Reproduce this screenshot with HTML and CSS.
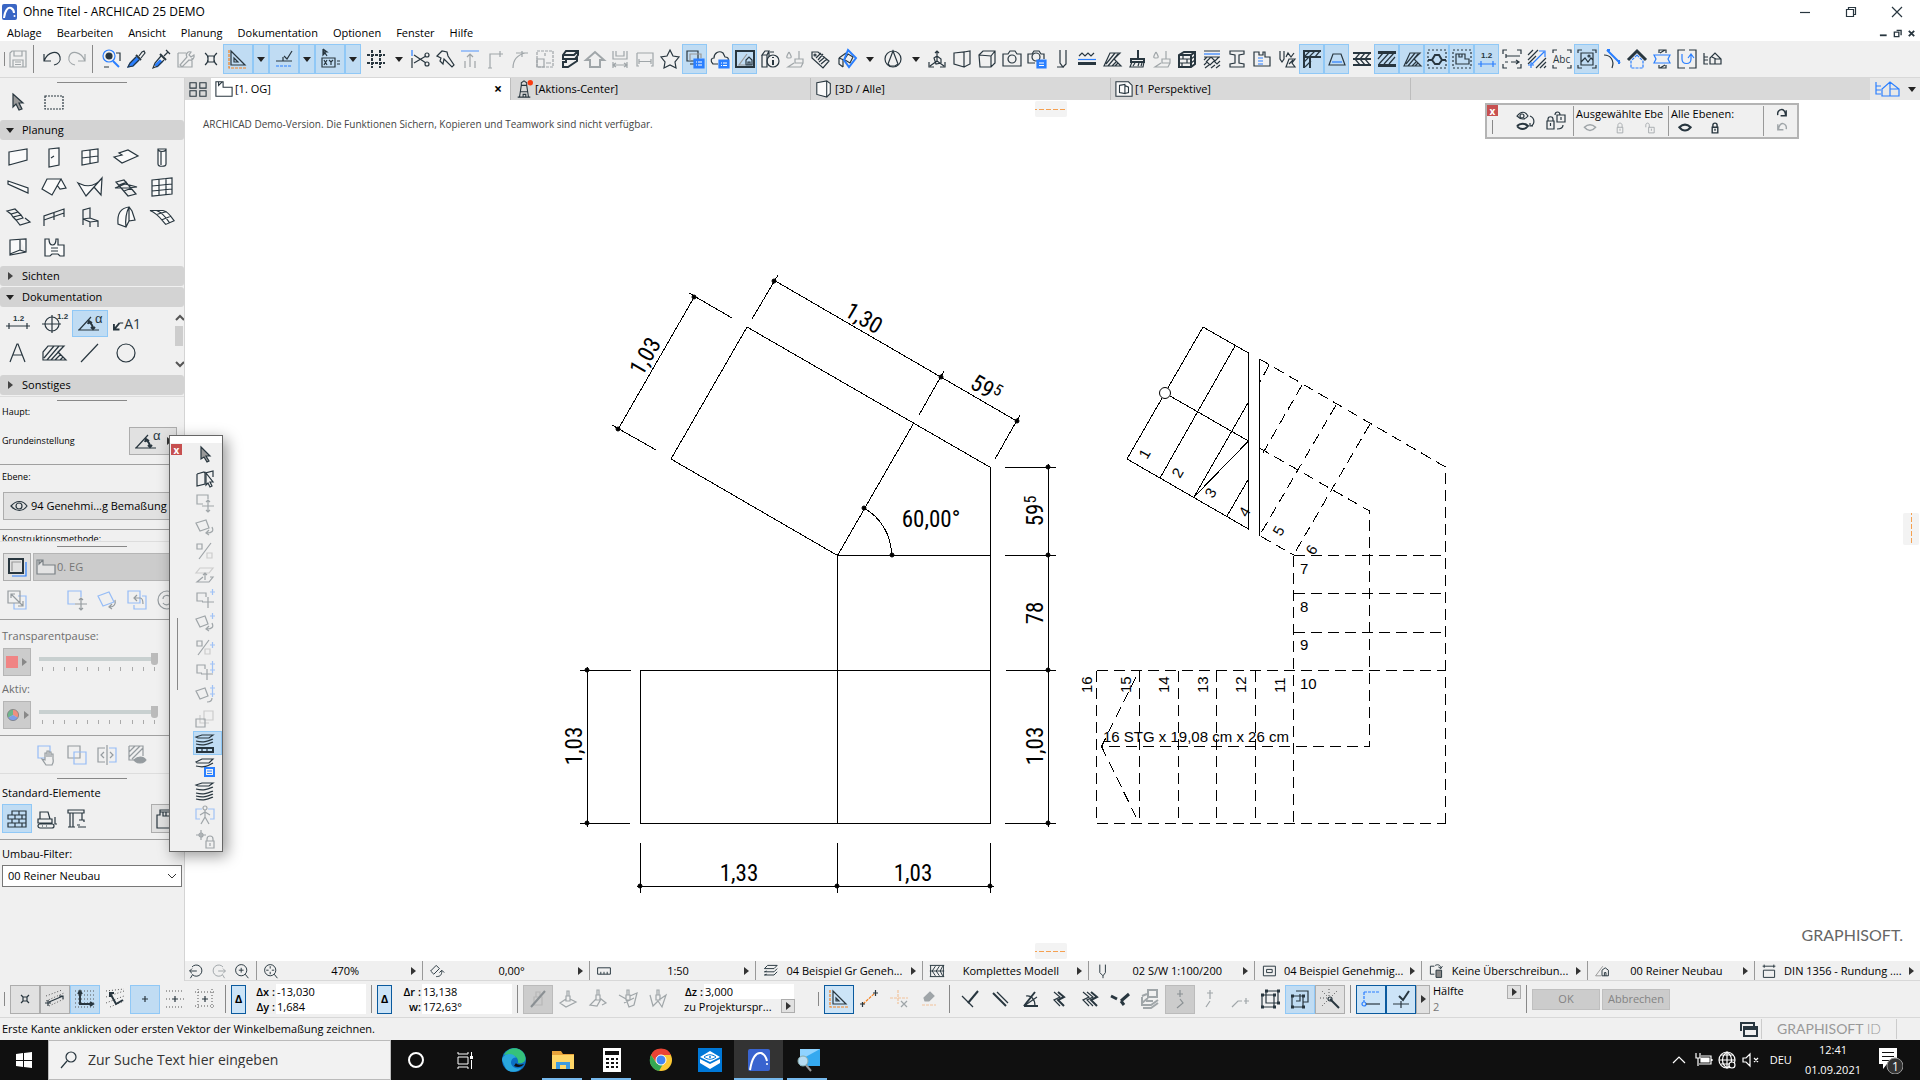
FILE: index.html
```html
<!DOCTYPE html>
<html lang="de">
<head>
<meta charset="utf-8">
<title>Ohne Titel - ARCHICAD 25 DEMO</title>
<link rel="stylesheet" href="styles.css">
</head>
<body>
<header class="titlebar">
  <svg class="applogo" viewBox="0 0 16 16"><rect width="15" height="16" rx="2" fill="#3a66c4"/><path d="M2 14C3 6 6 3 9 4c2 1 3 3 3 5" fill="none" stroke="#fff" stroke-width="2"/><circle cx="12.500" cy="12" r="1" fill="#fff"/></svg>
  <h1>Ohne Titel - ARCHICAD 25 DEMO</h1>
  <div class="winbtns">
    <button aria-label="Minimieren"><svg class="i" viewBox="0 0 20 20"><path d="M5 10.500h10"/></svg></button>
    <button aria-label="Verkleinern"><svg class="i" viewBox="0 0 20 20"><path d="M5.500 7.500h7v7h-7zM7.500 7.500v-2h7v7h-2"/></svg></button>
    <button aria-label="Schließen"><svg class="i" viewBox="0 0 20 20"><path d="M5 5l10 10M15 5L5 15"/></svg></button>
  </div>
</header>
<nav class="menubar">
  <a href="#">Ablage</a><a href="#">Bearbeiten</a><a href="#">Ansicht</a><a href="#">Planung</a><a href="#">Dokumentation</a><a href="#">Optionen</a><a href="#">Fenster</a><a href="#">Hilfe</a>
  <div class="docbtns">
    <svg class="i s" viewBox="0 0 20 20"><path stroke-width="4" d="M2 14h15"/></svg>
    <svg class="i s" viewBox="0 0 20 20"><path stroke-width="3" d="M3 7h10v10H3zM8 3h10v11"/></svg>
    <svg class="i s" viewBox="0 0 20 20"><path stroke-width="4" d="M4 4l12 12M16 4L4 16"/></svg>
  </div>
</nav>
<div class="toolbar">
  <i class="sep short"></i>
  <button class="dis" aria-label="Sichern"><svg class="i" viewBox="0 0 20 20"><path d="M2 4l2-2h14v16H2zM6 2v5h8V2M5 18v-7h10v7M7 13h6M7 15.500h6"/></svg></button>
  <i class="sep"></i>
  <button aria-label="Widerrufen"><svg class="i" viewBox="0 0 20 20"><path d="M2 5v7h7M2 12C6 2 16 1 18 8c1 4-2 7-6 8"/></svg></button>
  <button class="dis" aria-label="Wiederholen"><svg class="i" viewBox="0 0 20 20"><path d="M18 5v7h-7M18 12C14 2 4 1 2 8c-1 4 2 7 6 8"/></svg></button>
  <i class="sep"></i>
  <button aria-label="Suchen"><svg class="i" viewBox="0 0 20 20"><circle class="f" cx="8" cy="7" r="3"/><circle class="b" cx="8" cy="7" r="6"/><path class="b" stroke-width="2" d="M12 12l6 6"/><path d="M3 18h5M15 4h4v8"/></svg></button>
  <button aria-label="Parameter aufnehmen"><svg class="i" viewBox="0 0 20 20"><path class="bf" d="M2 18l2-4 6-6 3 3-6 6z"/><path stroke-width="2" d="M10 6l5 5"/><path d="M13 7l3-4 2-1 1 2-4 5M10 8l-6 6-2 4 5-1 6-6"/></svg></button>
  <button aria-label="Parameter übertragen"><svg class="i" viewBox="0 0 20 20"><path class="bf" d="M4 16l5-5 2 2-5 5z"/><path stroke-width="2" d="M9 5l6 6"/><path d="M13 7l4-4M15 1l4 4M10 7l-6 7-2 5 5-2 6-6"/></svg></button>
  <button class="dis" aria-label="Suchen und aktivieren"><svg class="i" viewBox="0 0 20 20"><path d="M2 4h8M2 4v14h14V9M11 8c-2-3 1-6 4-5l-2 3 2 2 3-2c1 3-2 6-5 5l-7 7-2-2z"/></svg></button>
  <button aria-label="Fangpunkt"><svg class="i" viewBox="0 0 20 20"><path d="M7 7h6v6H7zM4 4c3 2 3 4 3 6s0 4-3 6M16 4c-3 2-3 4-3 6s0 4 3 6"/></svg></button>
  <button class="on w" aria-label="Hilfslinien"><svg class="i" viewBox="0 0 20 20"><path d="M3 2l14 14H3zM6 9l4 4H6z"/><path class="o" stroke-dasharray="3 1" d="M1 1v18h18"/></svg></button><button class="on drop" aria-label="Optionen Hilfslinien"><b></b></button>
  <button class="on w" aria-label="Fanglinien"><svg class="i" viewBox="0 0 20 20"><path d="M2 12h16M9 12V8M10 7l3 3 5-8"/><path class="b" stroke-dasharray="3 1" d="M2 17h16"/></svg></button><button class="on drop" aria-label="Optionen Fanglinien"><b></b></button>
  <button class="on w" aria-label="Tracker"><svg class="i" viewBox="0 0 20 20"><path class="f" d="M3 0v6l2-2 2 3M3 0l4 3H5"/><path d="M2 9h13v9H2zM17 12h3M17 15h3M4 11l3 5M7 11l-3 5M9 11l2 2 2-2M11 13v3"/></svg></button><button class="on drop" aria-label="Optionen Tracker"><b></b></button>
  <button class="w" aria-label="Raster"><svg class="i" viewBox="0 0 20 20"><path stroke-width="2" stroke-dasharray="3 1" d="M1 6h18M1 14h18M6 1v18M14 1v18"/></svg></button><button class="drop" aria-label="Optionen Raster"><b></b></button>
  <button aria-label="Ausschneiden"><svg class="i" viewBox="0 0 20 20"><path class="b" d="M2 1v6"/><path d="M2 9v10M4 14l12-7M4 6l12 8"/><circle cx="17" cy="6" r="2"/><circle cx="17" cy="15" r="2"/></svg></button>
  <button aria-label="Trimmen"><svg class="i" viewBox="0 0 20 20"><path d="M2 7l5-5 5 1 1 4 6 9-2 2-8-8-1 5-3-3 1-3z"/></svg></button>
  <button class="dis" aria-label="Höhe"><svg class="i" viewBox="0 0 20 20"><path class="b" stroke-width="2" d="M1 2h18"/><path d="M10 5v13M7 8l3-3 3 3M5 12v7M15 12v7"/></svg></button>
  <button class="dis" aria-label="Ecke"><svg class="i" viewBox="0 0 20 20"><path d="M5 19V5h13M15 2v6M3 19h4"/></svg></button>
  <button class="dis" aria-label="Kurve"><svg class="i" viewBox="0 0 20 20"><path d="M3 19C3 11 7 6 15 4M12 2v6M6 4h12"/></svg></button>
  <button class="dis" aria-label="Skalieren"><svg class="i" viewBox="0 0 20 20"><path stroke-dasharray="3 1" d="M2 2h16v16H2z"/><path d="M2 10h7v8H2zM11 14h5M10 7V4"/></svg></button>
  <button aria-label="Profil"><svg class="i" viewBox="0 0 20 20"><path stroke-width="2" d="M3 6l3-4h12v4l-3 4H3zM3 6h11l4-4M6 10v3H3v5h5l9-6v-4"/></svg></button>
  <button class="dis" aria-label="Dach"><svg class="i" viewBox="0 0 20 20"><path stroke-width="2" d="M1 11l9-8 9 8h-4v7H5v-7z"/></svg></button>
  <button class="dis" aria-label="Spur"><svg class="i" viewBox="0 0 20 20"><path d="M3 2v8h14V2M3 13v6M17 13v6M3 16h14M6 2v5h8V2M6 14l-3 2 3 2M14 14l3 2-3 2"/></svg></button>
  <button class="dis" aria-label="Maß"><svg class="i" viewBox="0 0 20 20"><path d="M2 4h16v13h-2M2 4v13h2M4 10v5M16 10v5M4 12.500h12"/></svg></button>
  <button aria-label="Favoriten"><svg class="i" viewBox="0 0 20 20"><path d="M10 1l3 6 6 1-4 5 1 6-6-3-6 3 1-6-4-5 6-1z"/></svg></button>
  <button class="on" aria-label="Ansichten"><svg class="i" viewBox="0 0 20 20"><path d="M2 2h11v10H2zM5 15h4"/><path class="g" d="M5 12V5h11v4"/><path class="bf" d="M9 10h10v9H9z"/><path class="wh" d="M11 13h1M13 13h4M11 16h1M13 16h4"/></svg></button>
  <button aria-label="Cloud"><svg class="i" viewBox="0 0 20 20"><path d="M8 15H3C0 12 1 9 4 9c0-5 5-8 9-5l2 4c3 0 4 2 3 3"/><path class="bf" d="M9 11h10v8H9z"/><path class="wh" d="M11 14h1M13 14h4M11 16.500h1M13 16.500h4"/></svg></button>
  <button class="on" aria-label="Projekt"><svg class="i" viewBox="0 0 20 20"><path stroke-width="2" d="M1 2h18v16H1z"/><path class="g" d="M10 16H4l8-11"/><path d="M11 16v-5l3-3 3 3v5zM13 16v-3h2v3"/></svg></button>
  <button aria-label="Information"><svg class="i" viewBox="0 0 20 20"><path d="M2 6l3-4h4L7 6zM2 6v12h5V6M9 2v5M10 3h4"/><circle cx="13" cy="12" r="6"/><path stroke-width="2" d="M13 11v5M13 8v1"/></svg></button>
  <button class="dis" aria-label="Oberfläche malen"><svg class="i" viewBox="0 0 20 20"><path d="M4 3c3 5 3 6 0 6s-3-1 0-6M14 2v8M10 10h8v4h-8zM9 14l-6 4h13l2-4"/></svg></button>
  <button aria-label="Etikett"><svg class="i" viewBox="0 0 20 20"><path d="M2 3l6 0 11 9-6 7L2 9zM6 9l5-5M8 11l5-6M11 15l6-5M9 13l6-5"/><circle cx="5" cy="6" r="1"/></svg></button>
  <button class="w" aria-label="3D-Schnitt"><svg class="i" viewBox="0 0 20 20"><path d="M2 9l7-5M2 9v6l4 3M2 9l5 2 4-6 5 3-3 6-5-3M6 18v-7"/><path class="b" stroke-width="2" d="M11 1l8 8-7 9-5-7z"/></svg></button><button class="drop" aria-label="Optionen 3D"><b></b></button>
  <button class="w" aria-label="Sonne"><svg class="i" viewBox="0 0 20 20"><circle cx="10" cy="10" r="8"/><path d="M10 2l5 13-3 2H7l-2-2z"/></svg></button><button class="drop" aria-label="Optionen Sonne"><b></b></button>
  <button aria-label="Achsen"><svg class="i" viewBox="0 0 20 20"><path d="M10 12V2M8 4l2-2 2 2M10 12l-7 5M10 12l7 5M2 13v5h5M13 18h5v-5M7 9l3-2 4 3v4l-5 1z"/></svg></button>
  <button aria-label="3D-Fenster"><svg class="i" viewBox="0 0 20 20"><path d="M2 4l10-1v15L2 15zM12 3l6-1v13l-6 3"/></svg></button>
  <button aria-label="Quader"><svg class="i" viewBox="0 0 20 20"><path d="M2 6l4-4h12v12l-4 4H3zM2 6l12 1 4-5M14 7v11"/></svg></button>
  <button aria-label="Kamera"><svg class="i" viewBox="0 0 20 20"><path d="M1 5h5l2-3h5l2 3h4v12H1z"/><circle cx="10" cy="10" r="4"/></svg></button>
  <button aria-label="Kamera-Einstellungen"><svg class="i" viewBox="0 0 20 20"><path d="M8 14H1V5h4l2-3h5l2 3h3v5"/><circle cx="9" cy="8" r="4"/><path class="bf" d="M10 11h9v8h-9z"/><path class="wh" d="M12 14h5M12 16.500h5"/></svg></button>
  <button aria-label="Stift"><svg class="i" viewBox="0 0 20 20"><path d="M8 1v13l3 4 3-3V1M11 17v2M5 18h5"/></svg></button>
  <button aria-label="Linientyp"><svg class="i" viewBox="0 0 20 20"><path d="M2 7l3-3 3 3 3-3 3 3 3-3"/><path class="b" d="M1 10.500h18"/><path stroke-width="3" d="M1 14.500h18"/></svg></button>
  <button aria-label="Schraffur"><svg class="i" viewBox="0 0 20 20"><path d="M2 17L8 4h10l-6 6 7 7zM4 15L13 4M6 17L16 5M10 17l4-4M13 17l3-3"/></svg></button>
  <button aria-label="Pinsel"><svg class="i" viewBox="0 0 20 20"><path stroke-width="2" d="M11 1v8M4 10h13v3H4z"/><path d="M5 13l-2 5h13l1-5M8 14l-2 3M12 14l-1 3M15 14l-1 3"/></svg></button>
  <button class="dis" aria-label="Oberfläche"><svg class="i" viewBox="0 0 20 20"><path d="M4 3c3 5 3 6 0 6s-3-1 0-6M14 2v8M10 10h8v4h-8zM9 14l-6 4h13l2-4"/></svg></button>
  <button aria-label="Baustoffe"><svg class="i" viewBox="0 0 20 20"><path stroke-width="2" d="M2 6l5-3h11v12l-4 3H2zM2 6h12l4-3M14 6v12"/><path d="M2 10h12M2 14h12M6 6v4M10 10v4M5 14v4M14 10l4-3M14 14l4-3"/></svg></button>
  <button aria-label="Schichten"><svg class="i" viewBox="0 0 20 20"><path class="b" d="M2 5h16"/><path d="M2 2h16M2 8h16M2 11l3-3M4 13l5-5 4 4 4-4M2 16l3-3 3 3 4-4 3 3 3-3M3 19l4-3M9 19l4-3M14 19l4-3"/></svg></button>
  <button aria-label="Träger"><svg class="i" viewBox="0 0 20 20"><path d="M3 2h14v3l-5 1v8l5 1v3H3v-3l5-1V6L3 5z"/></svg></button>
  <button aria-label="Raum"><svg class="i" viewBox="0 0 20 20"><path d="M2 3h5v3h4V3h2v5h5v9H2z"/><path class="b" d="M6 9h5M6 12h5M6 15h5"/></svg></button>
  <button aria-label="Stifte"><svg class="i" viewBox="0 0 20 20"><path d="M3 2v8l2 3 2-3V2M9 8l2-4 3 4 3-4M9 18l3-8h6l-3 4 3 4zM12 15l4-4"/></svg></button>
  <button class="on" aria-label="Wandverbindung"><svg class="i" viewBox="0 0 20 20"><path stroke-width="2" d="M1 2h18M1 8h18M2 2v17M8 8v11"/><path d="M2 8l6-6M2 13L13 2M3 18l6-6M13 8l5-6"/></svg></button>
  <button class="on" aria-label="Dachform"><svg class="i" viewBox="0 0 20 20"><path d="M6 5h8l4 11H2z"/><path class="b" d="M5 13h10"/></svg></button>
  <button aria-label="Wandschicht"><svg class="i" viewBox="0 0 20 20"><path stroke-width="2" d="M1 4h18M1 10h18M1 16h18"/><path d="M3 10l5-6M8 10l5-6M13 10l5-6M3 10l5 6M8 10l5 6M13 10l5 6"/></svg></button>
  <button class="on" aria-label="Wandschraffur"><svg class="i" viewBox="0 0 20 20"><path stroke-width="3" d="M1 3.500h18M1 16.500h18"/><path d="M2 15L12 4M7 15L17 4M12 15l6-7M1 10l5-6"/></svg></button>
  <button class="on" aria-label="Schraffuren"><svg class="i" viewBox="0 0 20 20"><path d="M2 17L8 4h10l-6 6 7 7zM4 15L13 4M6 17L16 5M10 17l4-4M13 17l3-3"/></svg></button>
  <button class="on" aria-label="Morph"><svg class="i" viewBox="0 0 20 20"><path stroke-dasharray="2 2" d="M1 1h18v18H1z"/><path stroke-width="2" d="M1 11h4l3-5h4l3 5h4M5 11l3 4h4l3-4"/></svg></button>
  <button class="on" aria-label="Raumzone"><svg class="i" viewBox="0 0 20 20"><path stroke-dasharray="2 2" d="M1 1h18v18H1z"/><path d="M4 5h9v5h4v5H4zM7 5v3h3V5"/></svg></button>
  <button class="on" aria-label="Bemaßung"><svg class="i" viewBox="0 0 20 20"><text x="4" y="9" class="it">1.2</text><path class="b" d="M1 15h18M4 12v6M16 12v6"/></svg></button>
  <button aria-label="Einpassen"><svg class="i" viewBox="0 0 20 20"><path d="M1 5V1h4M15 1h4v4M19 15v4h-4M5 19H1v-4M4 7h14M4 5v4M3 13h3M9 13h7M14 11l3 2-3 2"/></svg></button>
  <button aria-label="Schraffurausrichtung"><svg class="i" viewBox="0 0 20 20"><path d="M1 6l5-5M1 11L11 1M1 15L9 7M9 19L19 9M13 19l6-6M17 19l2-2"/><path class="b" d="M5 15L17 3M12 2h6v6M4 13v6M1 16h6"/></svg></button>
  <button aria-label="Text"><svg class="i" viewBox="0 0 20 20"><path d="M1 4V1h4M15 1h4v3M19 16v3h-4M5 19H1v-3"/><text x="1" y="14" class="it abc">Abc</text></svg></button>
  <button class="on" aria-label="Bild"><svg class="i" viewBox="0 0 20 20"><path d="M1 4V1h4M15 1h4v3M19 16v3h-4M5 19H1v-3M4 4h12v12H4zM4 13l4-4 3 4 3-4 2 2"/><circle cx="12" cy="7" r="1"/></svg></button>
  <button aria-label="Tangente"><svg class="i" viewBox="0 0 20 20"><path d="M2 6c6 0 11 5 8 13"/><path class="b" stroke-width="2" d="M5 1l13 13M5 1h3M17 11v4"/></svg></button>
  <button aria-label="First"><svg class="i" viewBox="0 0 20 20"><path stroke-width="3" d="M1 11l9-9 9 9"/><path class="b" stroke-dasharray="3 1" d="M10 6l-6 6v7h12v-7z"/></svg></button>
  <button aria-label="Rohr"><svg class="i" viewBox="0 0 20 20"><path class="b" d="M2 6h16l-2 4 2 4H2l2-4z"/><path d="M7 4V1h7v3M8 4l5-3M7 16v3h7v-3M8 19l5-3"/></svg></button>
  <button aria-label="Magnet"><svg class="i" viewBox="0 0 20 20"><path d="M8 1H1v18h7M12 1h7v18h-7"/><path class="b" d="M5 5v5c0 6 9 6 9 0V6M11 9l3-4 3 4"/></svg></button>
  <button aria-label="Projekt-Mappe"><svg class="i" viewBox="0 0 20 20"><path d="M2 4v11h4M2 8h4M2 11h4M8 15v-6l5-5 6 6v5zM13 15v-5h6M10 8l4 2"/></svg></button>
</div>
<div class="middle">
  <aside class="sidebar">
    <hr class="grip">
    <div class="arrowrow">
      <button aria-label="Pfeil"><svg class="i" viewBox="0 0 20 20"><path fill="#999" d="M5 2l10 9H11l3 6-3 1-3-6-3 3z"/></svg></button>
      <button aria-label="Markierung"><svg class="i" viewBox="0 0 20 20"><path stroke-dasharray="2 1" d="M1 4h18v13H1z"/></svg></button>
    </div>
    <button class="sect open">Planung</button>
    <div class="tools">
      <button aria-label="Wand"><svg class="i" viewBox="0 0 20 20"><path class="w" d="M1 5l18-3v11L1 18z"/></svg></button>
      <button aria-label="Tür"><svg class="i" viewBox="0 0 20 20"><path class="w" d="M5 2l10-1v17l-10 2zM7 11l3-2"/></svg></button>
      <button aria-label="Fenster"><svg class="i" viewBox="0 0 20 20"><path class="w" d="M2 4l16-2v13L2 18zM10 3v14M2 11l16-2"/></svg></button>
      <button aria-label="Decke"><svg class="i l" viewBox="0 0 26 20"><path class="w" d="M1 10l8-2-3-2 9-3 10 6-16 7z"/></svg></button>
      <button aria-label="Stütze"><svg class="i" viewBox="0 0 20 20"><path class="w" d="M6 2h8v15c0 3-8 3-8 0zM9 5v13M6 3c2 2 6 2 8 0"/></svg></button>
      <button aria-label="Unterzug"><svg class="i" viewBox="0 0 20 20"><path class="w" d="M0 4l20 7v5L0 7z"/></svg></button>
      <button aria-label="Dach"><svg class="i l" viewBox="0 0 26 20"><path class="w" d="M1 12L6 2h14l-9 16zM20 2l5 9-6 1-3-4"/></svg></button>
      <button aria-label="Schale"><svg class="i l" viewBox="0 0 26 20"><path class="w" d="M1 6c10 5 18 3 24-5l-1 17-7-8-8 9zM9 19L25 1"/></svg></button>
      <button aria-label="Freiform"><svg class="i l" viewBox="0 0 26 20"><path d="M3 5l8-2 12 14-8 2zM2 11h12l10-1-12-3zM6 8l8-3M11 14l8-3"/></svg></button>
      <button aria-label="Fassade"><svg class="i" viewBox="0 0 20 20"><path class="w" d="M0 3l20-2v16L0 19zM7 2v16M14 1v17M0 9l20-2M0 14l20-2"/></svg></button>
      <button aria-label="Treppe"><svg class="i l" viewBox="0 0 26 20"><path d="M2 4l8-2 3 3-7 2zM6 7l2 3 8-2-3-3M8 10l3 3 7-2-2-3M11 13l4 5 10-3-5-4"/></svg></button>
      <button aria-label="Geländer"><svg class="i l" viewBox="0 0 26 20"><path d="M3 19V9l20-7v8M3 13l20-7M13 5v8"/></svg></button>
      <button aria-label="Objekt"><svg class="i" viewBox="0 0 20 20"><path d="M3 18V3l7-2v10M3 12l7-1 8 3v6M3 12l7 3v5M10 15l8-1"/></svg></button>
      <button aria-label="Morph"><svg class="i" viewBox="0 0 20 20"><path class="w" d="M2 17C1 7 5 1 13 0l3 4 3 9-6 1-3 6zM13 0c-3 6-4 12-3 20M13 0v14"/></svg></button>
      <button aria-label="Netz"><svg class="i l" viewBox="0 0 28 20"><path class="w" d="M1 3h14c6 1 8 6 12 11l-9 4C12 11 9 6 1 3M8 3c6 2 10 7 14 13M9 7l10-3M14 13l10-4"/></svg></button>
      <button aria-label="Raum"><svg class="i" viewBox="0 0 20 20"><path class="w" d="M2 3l16-1v13L2 18zM12 2v11l6 2M12 13L2 17"/></svg></button>
      <button aria-label="Öffnung"><svg class="i" viewBox="0 0 20 20"><path class="w" d="M1 2h4c0 8 7 8 7 0h2v6h6v11h-4l-2-2h-6l-2 2H1zM7 11h7M7 14h7"/></svg></button>
    </div>
    <button class="sect">Sichten</button>
    <button class="sect open">Dokumentation</button>
    <div class="tools docs">
      <button aria-label="Bemaßung"><svg class="i l" viewBox="0 0 26 20"><text x="8" y="8" class="it">1.2</text><path d="M1 13h24M4 10v6M22 10v6"/></svg></button>
      <button aria-label="Höhenkote"><svg class="i l" viewBox="0 0 26 20"><circle cx="11" cy="11" r="7"/><path d="M1 11h19M11 2v18"/><text x="16" y="6" class="it">1.2</text></svg></button>
      <button class="on" aria-label="Winkelbemaßung"><svg class="i l" viewBox="0 0 26 20"><path d="M1 17h21M2 17L14 4"/><path stroke-width="2" d="M12 9c3 2 4 4 4 7M11 11l1-3 3 2M14 14l2 2 2-2"/><text x="18" y="10" class="it al">α</text></svg></button>
      <button aria-label="Etikett"><svg class="i l" viewBox="0 0 28 20"><path stroke-width="2" d="M1 11v6h6M2 16l5-6"/><path d="M7 10h4"/><text x="12" y="16" class="it big">A1</text></svg></button>
      <i></i>
      <button aria-label="Text"><svg class="i" viewBox="0 0 20 20"><path d="M2 19L9 1h1l7 18M5 12h9"/></svg></button>
      <button aria-label="Schraffur"><svg class="i l" viewBox="0 0 26 20"><path d="M2 17V9l5-6h16l-6 6 8 8zM3 15L13 3M6 17L18 3M10 17L22 4M14 17l6-6M19 17l3-3"/></svg></button>
      <button aria-label="Linie"><svg class="i" viewBox="0 0 20 20"><path d="M1 19L18 1"/></svg></button>
      <button aria-label="Kreis"><svg class="i" viewBox="0 0 20 20"><circle cx="10" cy="10" r="9"/></svg></button>
      <div class="scroll"><svg viewBox="0 0 9 54"><path class="u" d="M1 6l4-4 4 4M1 48l4 4 4-4"/><rect y="12" width="8" height="20" fill="#cdcdcd"/></svg></div>
    </div>
    <button class="sect">Sonstiges</button>
    <div class="info">
      <hr class="grip">
      <p class="cap">Haupt:</p>
      <div class="mainrow"><span class="cap">Grundeinstellung</span>
        <button class="raised" aria-label="Winkel-Einstellungen"><svg class="i l" viewBox="0 0 26 20"><path d="M0 17h21M1 17L13 4"/><path stroke-width="2" d="M11 9c3 2 4 4 4 7M10 11l1-3 3 2M13 14l2 2 2-2"/><text x="18" y="9" class="it al">α</text></svg><b></b></button></div>
      <p class="cap eb">Ebene:</p>
      <button class="raised layer"><svg class="i" viewBox="0 0 20 20"><path d="M2 10c5-6 12-6 16 0-4 6-11 6-16 0z"/><circle cx="10" cy="10" r="3"/></svg>94 Genehmi...g Bemaßung</button>
      <p class="cap clip">Konstruktionsmethode:</p>
    </div>
    <div class="trace">
      <hr class="grip">
      <div class="row"><button class="raised" aria-label="Transparentpause"><svg class="i" viewBox="0 0 20 20"><path class="b" d="M5 19h14V5"/><path stroke-width="2" d="M2 2h14v14H2z"/><path class="g" d="M5 14V5h9"/></svg></button>
      <button class="ref" disabled><svg class="i" viewBox="0 0 20 20"><path class="w" d="M1 3h6v5h12v9H1zM3 3v4l4-4"/></svg>0. EG</button></div>
      <div class="row ghost">
        <svg class="i" viewBox="0 0 20 20"><path class="b" d="M11 6h8v13H7v-6"/><path d="M1 1h12v12H1zM4 4l12 12M4 8V4h4M16 11v5h-5"/></svg>
        <svg class="i sp" viewBox="0 0 20 20"><path class="b" d="M8 14H1V1h13v6"/><path d="M14 8v12M8 14h12M12 10l2-2 2 2M12 18l2 2 2-2"/></svg>
        <svg class="i" viewBox="0 0 20 20"><path class="b" d="M1 6l11-4 5 10-11 4z"/><path d="M18 10c1 4-1 7-5 7M15 14l-3 3 3 2"/></svg>
        <svg class="i" viewBox="0 0 20 20"><path class="b" d="M1 1h12v12H1zM15 6h4v13H7v-4"/><path d="M8 8h5c3 0 3 3 3 6M10 5L7 8l3 3"/></svg>
        <svg class="i" viewBox="0 0 20 20"><circle cx="10" cy="10" r="9"/><path d="M6 9c0-4 6-5 8-1M14 12c-1 3-6 4-8 1"/></svg>
      </div>
      <hr class="line">
      <label class="lab" for="op1">Transparentpause:</label>
      <div class="row slide"><button class="ref sq" aria-label="Farbe Transparentpause" disabled><i class="red"></i><b></b></button><div class="track"><input id="op1" type="range" value="100" disabled><div class="ticks"><i></i><i></i><i></i><i></i><i></i><i></i><i></i><i></i><i></i><i></i><i></i></div></div></div>
      <label class="lab" for="op2">Aktiv:</label>
      <div class="row slide second"><button class="ref sq" aria-label="Farbe Aktiv" disabled><svg class="pie" viewBox="0 0 20 20"><path fill="#6fb58c" d="M10 10V2a8 8 0 0 0-7 12z"/><path fill="#ef9080" d="M10 10V2a8 8 0 0 1 7 12z"/><path fill="#7f9fe8" d="M10 10l7 4a8 8 0 0 1-14 0z"/><circle cx="10" cy="10" r="8" fill="none" stroke="#777"/></svg><b></b></button><div class="track"><input id="op2" type="range" value="100" disabled><div class="ticks"><i></i><i></i><i></i><i></i><i></i><i></i><i></i><i></i><i></i><i></i><i></i></div></div></div>
      <hr class="line">
      <div class="row ghost mid">
        <svg class="i" viewBox="0 0 20 20"><path class="b" d="M8 13H1V1h12v6"/><path d="M9 20l-4-6 3 1V8h2v4V6h2v6V7h2v5V9h2v5c1 4-1 5-1 6z"/></svg>
        <svg class="i" viewBox="0 0 20 20"><path d="M1 1h12v12H1z"/><path class="b" d="M7 7h12v12H7z"/></svg>
        <svg class="i" viewBox="0 0 20 20"><path d="M8 3H1v14h7M7 7l-3 3 3 3M13 7l3 3-3 3M10 0v20"/><path class="b" d="M12 3h7v14h-7"/></svg>
        <svg class="i" viewBox="0 0 20 20"><path d="M2 1h14v10M2 1v14h6M2 7l6-6M2 12L13 1M5 14L16 3"/><path class="f" d="M7 15c4-4 9-4 12 0-3 4-9 4-12 0z"/></svg>
      </div>
    </div>
    <div class="reno">
      <hr class="grip">
      <p class="lab dark">Standard-Elemente</p>
      <div class="row els">
        <button class="on" aria-label="Bestand"><svg class="i" viewBox="0 0 20 20"><path d="M5 2h14v4H5zM1 6h14v4H1zM5 10h14v4H5zM1 14h14v4H1zM12 2v4M8 6v4M12 10v4M8 14v4M19 6v4M19 14v4h-4"/></svg></button>
        <button aria-label="Abbruch"><svg class="i" viewBox="0 0 20 20"><path d="M3 10V3h8l2 7M1 10h14v4H1zM18 8v7h2M3 15h12a2 2 0 0 1 0 4H3a2 2 0 0 1 0-4M5 17h1M9 17h1"/></svg></button>
        <button aria-label="Neubau"><svg class="i" viewBox="0 0 20 20"><path d="M1 1h16v3H1zM3 4v14M6 4v14M1 18h7M15 4v7M12 11h5v2M11 18h8M10 16h3"/></svg></button>
        <button class="raised end" aria-label="Überschreibungen"><svg class="i" viewBox="0 0 20 20"><path d="M1 6h3V3h3v4h12v12H1zM4 3V1h12v14M7 3h7M10 7V3"/></svg></button>
      </div>
      <hr class="line">
      <label class="lab dark" for="filt">Umbau-Filter:</label>
      <select id="filt"><option>00 Reiner Neubau</option></select>
    </div>
  </aside>
  <main class="main">
    <nav class="tabs">
      <button class="ov" aria-label="Übersicht"><svg class="i" viewBox="0 0 20 20"><path d="M1 3h7v6H1zM12 3h7v6h-7zM1 12h7v6H1zM12 12h7v6h-7z"/></svg></button>
      <a class="tab act" href="#"><svg class="i" viewBox="0 0 20 20"><path d="M1 2h8v6h10v10H1zM4 2v4l4-4"/></svg>[1. OG]<span>×</span></a>
      <a class="tab" href="#"><svg class="i" viewBox="0 0 20 20"><path d="M3 19h14M5 19L7 6h6l2 13M7 6V3l3-2 3 2v3M6 13h8M9 19v-3h3v3"/><circle cx="17" cy="3" r="3" fill="#fb3b10" stroke="none"/></svg>[Aktions-Center]</a>
      <a class="tab" href="#"><svg class="i" viewBox="0 0 20 20"><path class="w" d="M2 3l11-2v18L2 16zM13 1l4 3v11l-4 4"/></svg>[3D / Alle]</a>
      <a class="tab" href="#"><svg class="i" viewBox="0 0 20 20"><path class="w" d="M1 2h14l4 4v12H1z"/><path d="M5 6l6-1v10l-6-1zM11 6l4 2v6l-4 1"/></svg>[1 Perspektive]</a>
      <button class="navi" aria-label="Navigator"><svg class="i l" viewBox="0 0 26 20"><path class="b" d="M2 3v12h5M2 7h5M2 11h5M8 17V10l8-7 9 7v7zM16 3v14M16 10h9"/></svg><b></b></button>
    </nav>
    <section class="canvas">
      <p class="note">ARCHICAD Demo-Version. Die Funktionen Sichern, Kopieren und Teamwork sind nicht verfügbar.</p>
      <svg class="plan" width="100%" height="100%">
        <g transform="translate(-185 -100)">
          <path d="M747 327L671 459L837.500 555.500L913.500 423.500M747 327L990.500 467.500V823.500H640.500V670.500H990.500M837.500 555.500H990.500M837.500 555.500V823.500"/>
          <path d="M864 508A54 54 0 0 1 891.500 555.500"/>
          <path d="M587.500 667V827M580 670.500H631M580 823.500H630M640.500 843V893M837.500 843V893M990.500 843V893M637 886.500H994M1048.500 464V827M1005 467.500H1056M1005 555.500H1056M1006 670.500H1056M1005 823.500H1056"/>
          <path d="M689 293L732 318M612 425L656 450M694.500 296.500L618.500 428.500M774.500 280.500L1017.500 421.500M778 275L752 319M944 371L919 415M1020 415L995 459"/>
          <g class="dots"><circle cx="587" cy="670" r="2"/><circle cx="587" cy="823" r="2"/><circle cx="640" cy="886" r="2"/><circle cx="837" cy="886" r="2"/><circle cx="990" cy="886" r="2"/><circle cx="1048" cy="467" r="2"/><circle cx="1048" cy="555" r="2"/><circle cx="1048" cy="670" r="2"/><circle cx="1048" cy="823" r="2"/><circle cx="694" cy="297" r="2"/><circle cx="618" cy="429" r="2"/><circle cx="774" cy="281" r="2"/><circle cx="941" cy="377" r="2"/><circle cx="1017" cy="421" r="2"/><circle cx="864" cy="508" r="2"/><circle cx="892" cy="555" r="2"/></g>
          <g class="dim">
            <text x="931" y="527">60,00°</text><text x="739" y="881">1,33</text><text x="913" y="881">1,03</text>
            <text transform="translate(582 746) rotate(-90)">1,03</text><text transform="translate(1043 746) rotate(-90)">1,03</text><text transform="translate(1043 613) rotate(-90)">78</text>
            <text transform="translate(1043 511) rotate(-90)">59<tspan dy="-7" class="sup">5</tspan></text>
            <text transform="translate(652 360) rotate(-60)">1,03</text><text transform="translate(860 325) rotate(30)">1,30</text><text transform="translate(982 395) rotate(30)">59<tspan dy="-7" class="sup">5</tspan></text>
          </g>
          <path d="M1248.500 353V529L1127 459L1203 327L1248.500 353M1235 346L1160 478M1248.500 402L1194 497L1248.500 441L1170 396M1248.500 479L1227 516M1259.500 359V536"/>
          <circle cx="1165" cy="393" r="5.500" fill="#fff"/>
          <path class="dash" d="M1259.500 359L1445.500 467V823.500M1269 365L1259 384M1302 385L1259 460M1336 405L1259.500 535.500L1293.500 555M1370 424L1293.500 555M1259.500 448L1369.500 511V746.500H1101.500L1139 671M1101.500 746.500L1139 823M1293.500 555.500H1445.500M1293.500 593.500H1445.500M1293.500 632.500H1445.500M1096.500 670.500H1445.500M1096.500 823.500H1445.500M1096.500 670.500V823.500M1139.500 670.500V823.500M1178.500 670.500V823.500M1216.500 670.500V823.500M1255.500 670.500V823.500M1293.500 555.500V823.500"/>
          <g class="num">
            <text x="1300" y="574">7</text><text x="1300" y="612">8</text><text x="1300" y="650">9</text><text x="1300" y="689">10</text><text x="1103" y="742">16 STG x 19,08 cm x 26 cm</text>
            <text transform="translate(1092 693) rotate(-90)">16</text><text transform="translate(1131 693) rotate(-90)">15</text><text transform="translate(1169 693) rotate(-90)">14</text><text transform="translate(1208 693) rotate(-90)">13</text><text transform="translate(1246 693) rotate(-90)">12</text><text transform="translate(1285 693) rotate(-90)">11</text>
            <text transform="translate(1147 460) rotate(-60)">1</text><text transform="translate(1180 479) rotate(-60)">2</text><text transform="translate(1213 499) rotate(-60)">3</text><text transform="translate(1247 518) rotate(-60)">4</text><text transform="translate(1281 537) rotate(-60)">5</text><text transform="translate(1314 556) rotate(-60)">6</text>
          </g>
        </g>
      </svg>
      <i class="handle top"></i><i class="handle bottom"></i><i class="handle right"></i>
      <div class="layers">
        <div class="lx"><button class="close" aria-label="Palette schließen">x</button><i></i></div>
        <svg class="i" viewBox="0 0 20 20"><path d="M1 5c4-5 8-5 11 0-3 4-7 4-11 0z"/><circle cx="6" cy="5" r="2"/><path stroke-width="2" d="M1 15c3-3 8-3 11 0-3 4-8 4-11 0"/><path d="M14 5c5 2 5 8 1 10M17 15h-3v-3"/></svg>
        <svg class="i" viewBox="0 0 20 20"><path d="M1 10h7v8H1zM2 10V8c0-3 5-3 5 0v2M11 4h8v7h-8zM9 4c0-4 5-4 5 0M4.500 12v3M15 6v3M11 18c4 0 6-1 6-4"/></svg>
        <div class="grp"><span>Ausgewählte Ebe</span><div class="dis"><svg class="i" viewBox="0 0 20 20"><path stroke-width="2" d="M2 9c5-5 11-5 16 0-5 6-11 6-16 0z"/></svg><svg class="i" viewBox="0 0 20 20"><path d="M6 9h8v8H6zM7 9V6c0-4 6-4 6 0v3M10 11v3"/></svg><svg class="i" viewBox="0 0 20 20"><path d="M8 9h8v8H8zM4 9V6c0-4 5-4 5 0v3M12 11v3"/></svg></div></div>
        <div class="grp all"><span>Alle Ebenen:</span><div><svg class="i" viewBox="0 0 20 20"><path stroke-width="3" d="M2 9c5-5 11-5 16 0-5 6-11 6-16 0z"/></svg><svg class="i" viewBox="0 0 20 20"><path stroke-width="2" d="M6 9h8v8H6zM7 9V6c0-4 6-4 6 0v3M10 11v3"/></svg></div></div>
        <div class="grp last"><svg class="i" viewBox="0 0 20 20"><path stroke-width="2" d="M16 6v8h-8M15 13C15 1 2 4 4 13"/></svg><svg class="i dis" viewBox="0 0 20 20"><path stroke-width="2" d="M4 6v8h8M5 13C6 1 18 4 16 13"/></svg></div>
      </div>
      <div class="brand">GRAPHISOFT.</div>
    </section>
    <div class="quick">
      <div class="zooms">
        <svg class="i" viewBox="0 0 20 20"><path d="M2 10h9M5 7l-3 3 3 3M5 5a7 7 0 1 1 1 10M6 14l-3 5"/></svg>
        <svg class="i dis" viewBox="0 0 20 20"><path d="M18 10H9M15 7l3 3-3 3M15 5a7 7 0 1 0-1 10M14 14l3 5"/></svg>
        <svg class="i" viewBox="0 0 20 20"><circle cx="9" cy="9" r="7"/><path d="M6 9h6M9 6v6M14 14l4 5"/></svg>
      </div>
      <button><svg class="i" viewBox="0 0 20 20"><circle cx="9" cy="9" r="7"/><path d="M4 9h3M11 9h3M9 4v3M9 11v3M14 14l4 5"/></svg><span>470%</span><b></b></button>
      <button><svg class="i" viewBox="0 0 20 20"><path d="M2 10l7-7 4 4-7 7zM9 17c5 0 7-2 7-7M13 12l3-3 3 3"/></svg><span>0,00°</span><b></b></button>
      <button><svg class="i" viewBox="0 0 20 20"><path d="M2 6h16v8H2zM6 14v-3M10 14v-3M14 14v-3"/></svg><span>1:50</span><b></b></button>
      <button><svg class="i" viewBox="0 0 20 20"><path d="M3 7l4-4h12l-4 4zM3 11l3-1M3 11h12l4-4M3 15h12l4-4M3 15l3-1"/></svg><span>04 Beispiel Gr Geneh...</span><b></b></button>
      <button><svg class="i" viewBox="0 0 20 20"><path d="M1 3h18M1 10h18M1 17h18"/><path d="M2 3v14M18 3v14M4 10l4-6M9 10l4-6M14 10l3-6M4 10l4 6M9 10l4 6M14 10l3 6"/></svg><span>Komplettes Modell</span><b></b></button>
      <button><svg class="i" viewBox="0 0 20 20"><path d="M6 2v10l4 4 3-4V2M10 16v3"/></svg><span>02 S/W 1:100/200</span><b></b></button>
      <button><svg class="i" viewBox="0 0 20 20"><path d="M3 4h15v12H3zM7 8h7v4H7z"/></svg><span>04 Beispiel Genehmig...</span><b></b></button>
      <button><svg class="i" viewBox="0 0 20 20"><path d="M8 4H3v10h5M9 3c4-2 7 0 7 4M13 5l3 2 2-3"/><path fill="#888" d="M10 9h7v9h-7z"/></svg><span>Keine Überschreibun...</span><b></b></button>
      <button><svg class="i" viewBox="0 0 20 20"><path class="g" d="M9 16H2L11 4"/><path d="M10 16v-7l4-3 4 3v7zM13 16v-4h2v4"/></svg><span>00 Reiner Neubau</span><b></b></button>
      <button><svg class="i" viewBox="0 0 20 20"><path d="M2 4h16M4 2v4M16 2v4M3 9h14v9H3z"/></svg><span>DIN 1356 - Rundung ....</span><b></b></button>
    </div>
  </main>
  <div class="palette">
    <div class="pgrip"><button class="close" aria-label="Schließen">x</button><i></i></div>
    <div class="pcol">
      <button aria-label="Pfeil"><svg class="i" viewBox="0 0 20 20"><path fill="#999" d="M6 2l9 9h-4l3 5-2 1-3-5-3 2z"/></svg></button>
      <button aria-label="Auswahl"><svg class="i" viewBox="0 0 20 20"><path d="M2 5l7-2 1 1 8-2v6M2 5v12l8-2V4"/><path d="M11 4l7 9h-3l2 4-2 1-2-4-2 2z"/></svg></button>
      <button class="dis" aria-label="Verschieben"><svg class="i" viewBox="0 0 20 20"><path d="M8 11H2V2h11v4M13 7v12M7 13h12M11 9l2-2 2 2M11 17l2 2 2-2"/></svg></button>
      <button class="dis" aria-label="Drehen"><svg class="i" viewBox="0 0 20 20"><path d="M1 6l10-3 3 8-9 3zM17 10c2 4 0 6-5 6M14 13l-3 3 3 2"/></svg></button>
      <button class="dis" aria-label="Spiegeln"><svg class="i" viewBox="0 0 20 20"><path d="M2 3h5v5H2zM16 2L4 18"/><path class="g" d="M12 12h5v5h-5z"/></svg></button>
      <button class="dis" aria-label="Vertikal verschieben"><svg class="i" viewBox="0 0 20 20"><path class="g" d="M5 3h13l-4 5H1z"/><path d="M8 12l-6 5h12l4-5h-3M10 15V8M8 10l2-2 2 2"/></svg></button>
      <button class="dis" aria-label="Kopie verschieben"><svg class="i" viewBox="0 0 20 20"><path d="M8 12H2V4h9v4M13 8v11M7 13h12"/><path class="b" d="M15 3h5M17.500 0v6"/></svg></button>
      <button class="dis" aria-label="Kopie drehen"><svg class="i" viewBox="0 0 20 20"><path d="M1 6l9-3 3 8-8 3zM17 10c2 4 0 6-5 6M14 13l-3 3 3 2"/><path class="b" d="M15 3h5M17.500 0v6"/></svg></button>
      <button class="dis" aria-label="Kopie spiegeln"><svg class="i" viewBox="0 0 20 20"><path d="M2 4h5v5H2zM14 3L3 18"/><path class="g" d="M10 12h5v5h-5z"/><path class="b" d="M15 8h5M17.500 5v6"/></svg></button>
      <button class="dis" aria-label="Kopien verschieben"><svg class="i" viewBox="0 0 20 20"><path d="M7 12H2V4h8v4M12 8v11M6 13h12"/><path class="b" d="M15 3h5M17.500 0v12M15 9h5"/></svg></button>
      <button class="dis" aria-label="Kopien drehen"><svg class="i" viewBox="0 0 20 20"><path d="M1 6l9-3 3 8-8 3zM17 13c0 3-2 4-5 4"/><path class="b" d="M15 3h5M17.500 0v12M15 9h5"/></svg></button>
      <button class="dis" aria-label="Multiplizieren"><svg class="i" viewBox="0 0 20 20"><path class="g" d="M9 2h9v9H9zM5 6v8h9"/><path d="M1 10h9v8H1z"/></svg></button>
      <button class="on" aria-label="Ebenen"><svg class="i" viewBox="0 0 20 20"><path d="M1 4l6-2h11l-4 3H3zM1 8c8 2 12 0 17-2M1 11c8 2 12 0 17-2"/><path stroke-width="2" d="M2 15h16v4H2z"/><path d="M7 14v5M12 14v5"/></svg></button>
      <button aria-label="Ebenen-Einstellungen"><svg class="i" viewBox="0 0 20 20"><path d="M1 5l6-3h11l-4 4H2zM1 9c8 2 12 0 17-3"/><path class="b" stroke-width="2" d="M10 11h9v8h-9z"/><path class="b" d="M12 14h5M12 16.500h5"/></svg></button>
      <button aria-label="Ebenenkombination"><svg class="i" viewBox="0 0 20 20"><path d="M1 4l6-2h11l-4 3H3zM1 8c8 2 12 0 17-2M1 12c8 2 12 0 17-2M1 15c8 2 12 0 17-2M1 18c8 2 12 0 17-2"/></svg></button>
      <button class="dis" aria-label="Bearbeiten"><svg class="i" viewBox="0 0 20 20"><path class="b" d="M7 4H1v10h4M13 4h6v10h-4"/><circle cx="10" cy="3" r="2"/><path d="M10 5v7l-4 7M10 12l4 7M5 10l5-3 5 3"/></svg></button>
      <button class="dis" aria-label="Sperren"><svg class="i" viewBox="0 0 20 20"><path d="M1 6h10M6 1v10M11 12h8v7h-8zM12 12v-2c0-4 6-4 6 0v2M15 14v3"/><circle cx="6" cy="6" r="2"/></svg></button>
    </div>
  </div>
</div>
<div class="coords">
  <i class="sep short"></i>
  <button class="box" aria-label="Raster aus"><svg class="i" viewBox="0 0 20 20"><path d="M8 8h4v4H8zM6 6l2 2M14 6l-2 2M6 14l2-2M14 14l-2-2"/></svg></button>
  <button class="box" aria-label="Schräges Raster"><svg class="i" viewBox="0 0 20 20"><path class="pt" d="M1 7L17 1M1 12L19 4M4 17l15-7"/><path d="M4 13l14-6M14 7h4v3M3 11v6M0 14h6"/></svg></button>
  <button class="on" aria-label="Rechtwinkliges Raster"><svg class="i" viewBox="0 0 20 20"><path class="pt" d="M0 2h20M0 6h20M0 10h20M0 14h20M0 18h20"/><path stroke-width="2" d="M5 2v13h13M3 5l2-3 2 3M15 13l3 2-3 2"/></svg></button>
  <button aria-label="Gedrehtes Raster"><svg class="i" viewBox="0 0 20 20"><path class="pt" d="M1 2l18-2M1 8l18-6M1 14l18-7M5 18l14-6"/><path stroke-width="2" d="M5 4l6 11 7-4M5 8V4h4"/></svg></button>
  <button class="on" aria-label="Fangraster aus"><svg class="i" viewBox="0 0 20 20"><path d="M7 10h6M10 7v6"/></svg></button>
  <button aria-label="Fangraster"><svg class="i" viewBox="0 0 20 20"><path class="pt" d="M1 2h18M1 10h4M15 10h4M1 18h18"/><path d="M7 10h6M10 7v6"/></svg></button>
  <button aria-label="Konstruktionsraster"><svg class="i" viewBox="0 0 20 20"><path class="pt" d="M0 3h20M0 17h20M3 0v20M17 0v20"/><path d="M7 10h6M10 7v6"/></svg></button>
  <i class="sep"></i>
  <button class="delta" aria-label="Relative Koordinaten">Δ</button>
  <div class="pair"><label for="cx">Δx :</label><input id="cx" value="-13,030"><label for="cy">Δy :</label><input id="cy" value="1,684"></div>
  <i class="sep"></i>
  <button class="delta" aria-label="Relativer Radius">Δ</button>
  <div class="pair"><label for="cr">Δr :</label><input id="cr" value="13,138"><label for="cw">w:</label><input id="cw" value="172,63°"></div>
  <i class="sep"></i>
  <button class="box gray" aria-label="Arbeitsebene"><svg class="i dis" viewBox="0 0 20 20"><path class="g" d="M6 8h8v8H6zM8 8V3h4v5"/><path stroke-width="2" d="M3 18L17 2"/></svg></button>
  <button class="dis" aria-label="Ebene horizontal"><svg class="i" viewBox="0 0 20 20"><path d="M8 7h4v5H8zM9 7V2h2v5M8 10l-6 4 6 4 10-5-6-3"/></svg></button>
  <button class="dis" aria-label="Ebene schräg"><svg class="i" viewBox="0 0 20 20"><path d="M8 6h4v5H8zM9 6V1h2v5M8 10L2 16l7 1 4-7 5 4-4 2"/></svg></button>
  <button class="dis" aria-label="Ebene drei Punkte"><svg class="i" viewBox="0 0 20 20"><path d="M8 6h4v5H8zM9 6V1h2v5M1 6l7 4 3 8 5-2 3-12-7 3M6 14l10-5"/></svg></button>
  <button class="dis" aria-label="Ebene vertikal"><svg class="i" viewBox="0 0 20 20"><path d="M8 6h4v5H8zM9 6V1h2v5M2 6l3 11 5-5 4 6 4-12-7 5"/></svg></button>
  <div class="zbox"><div class="zl"><label for="cz">Δz :</label><input id="cz" value="3,000"></div><div class="zp"><span>zu Projekturspr...</span><button class="mini" aria-label="Bezug wählen"><b></b></button></div></div>
  <i class="sep short"></i>
  <button class="blue" aria-label="Hilfslinien"><svg class="i" viewBox="0 0 20 20"><path d="M4 2l13 13H4zM7 9l3 3H7z"/><path class="o" stroke-dasharray="3 1" d="M1 1v17h18"/></svg></button>
  <button aria-label="Hilfslinie ziehen"><svg class="i" viewBox="0 0 20 20"><path class="o" stroke-dasharray="3 1" d="M4 15L16 4"/><path d="M1 15h5M3.500 13v5M14 4h5M16.500 1v6"/></svg></button>
  <button class="dis" aria-label="Hilfslinie löschen"><svg class="i" viewBox="0 0 20 20"><path class="o" stroke-dasharray="3 1" d="M1 9h18M9 1v14"/><path d="M12 12l6 6M18 12l-6 6"/></svg></button>
  <button class="dis" aria-label="Radieren"><svg class="i" viewBox="0 0 20 20"><path class="f" d="M5 9l6-6 4 4-5 5H6z"/><path class="o" stroke-dasharray="3 1" d="M3 16h14"/></svg></button>
  <i class="sep"></i>
  <button aria-label="Senkrecht"><svg class="i" viewBox="0 0 20 20"><path stroke-width="2" d="M18 2L8 14"/><path d="M2 7l11 11"/></svg></button>
  <button aria-label="Parallel"><svg class="i" viewBox="0 0 20 20"><path stroke-width="2" d="M3 4l13 13"/><path d="M7 3l11 11"/></svg></button>
  <button aria-label="Winkelhalbierende"><svg class="i" viewBox="0 0 20 20"><path stroke-width="2" d="M4 17h14M4 17L15 3"/><path d="M4 17l13-9M6 7c5-1 9 3 9 10"/></svg></button>
  <button aria-label="Versatz"><svg class="i" viewBox="0 0 20 20"><path stroke-width="2" d="M8 3l6 5-6 3 6 6"/><path d="M4 3l6 5-6 3 6 6"/></svg></button>
  <button aria-label="Mehrfachversatz"><svg class="i" viewBox="0 0 20 20"><path stroke-width="2" d="M11 3l6 5-6 3 6 6"/><path d="M7 3l6 5-6 3 6 6M3 3l6 5-6 3 6 6"/></svg></button>
  <button aria-label="Fluchtpunkt"><svg class="i" viewBox="0 0 20 20"><path stroke-width="3" d="M1 7l6 3M11 12l8-7M11 12l3 4"/></svg></button>
  <button class="dis" aria-label="Fläche"><svg class="i" viewBox="0 0 20 20"><path stroke-width="2" d="M2 7l5-2M8 1h9v7H8zM2 14l6-5M2 8v8h9l7-5M3 19h8l7-5M6 12h7"/></svg></button>
  <button class="box gray" aria-label="Fangpunkt"><svg class="i dis" viewBox="0 0 20 20"><path d="M10 1v7M7 5h6M10 10l3 4-6 5"/></svg></button>
  <button class="dis" aria-label="Fang vertikal"><svg class="i" viewBox="0 0 20 20"><path d="M10 1v9M7 4h6M10 12l-4 6"/></svg></button>
  <button class="dis" aria-label="Fang horizontal"><svg class="i" viewBox="0 0 20 20"><path d="M2 18l6-6h4M14 12h5M16 9v6"/></svg></button>
  <button aria-label="Gruppe"><svg class="i" viewBox="0 0 20 20"><path d="M2 6h12v12H2zM6 2h12v12H6z"/><path stroke-width="3" stroke-dasharray="3 9" d="M1 6h15M1 18h15M5 2h15M17 14h3"/></svg></button>
  <button class="on" aria-label="Gruppen"><svg class="i" viewBox="0 0 20 20"><path d="M2 7h11v11H2zM6 2h12v11h-5M6 12h4V5"/><path stroke-width="3" stroke-dasharray="3 8" d="M1 7h14M1 18h14"/></svg></button>
  <button class="box" aria-label="Zauberstab"><svg class="i" viewBox="0 0 20 20"><path class="pt" d="M2 2l7 7M9 0v8M17 2l-6 6M0 9h8M2 17l6-6"/><path stroke-width="2" d="M10 10l9 9"/><circle cx="10" cy="10" r="2"/></svg></button>
  <i class="sep"></i>
  <button class="blue" aria-label="Element-Fang"><svg class="i" viewBox="0 0 20 20"><path class="b" stroke-dasharray="3 1" d="M3 3h15M3 3v10"/><circle class="b" cx="3" cy="15" r="2"/><path d="M5 15h14"/></svg></button>
  <button class="blue" aria-label="Spezialfang"><svg class="i" viewBox="0 0 20 20"><path d="M2 15h16M10 12v7"/><path stroke-width="2" d="M8 7l4 4 6-9"/></svg></button>
  <button class="mini tall" aria-label="Fangoptionen"><b></b></button>
  <div class="half"><span>Hälfte</span><span class="two">2</span></div><button class="mini up" aria-label="Teilung"><b></b></button>
  <i class="sep"></i>
  <button class="cmd" disabled>OK</button><button class="cmd" disabled>Abbrechen</button>
</div>
<footer class="status">
  <span>Erste Kante anklicken oder ersten Vektor der Winkelbemaßung zeichnen.</span>
  <svg class="i" viewBox="0 0 20 20"><path stroke-width="2" d="M3 12V4h13v3M6 8h13v9H6zM6 10h13"/></svg>
  <a href="#">GRAPHISOFT <em>ID</em></a>
</footer>
<div class="taskbar">
  <button class="start" aria-label="Start"><svg viewBox="0 0 16 16" width="16" height="16"><path fill="#fff" d="M0 2l7-1v7H0zM8 1l8-1v8H8zM0 9h7v6l-7-1zM8 9h8v7l-8-1z"/></svg></button>
  <label class="search"><svg class="i" viewBox="0 0 20 20"><circle cx="12" cy="7" r="5"/><path d="M8 11l-6 7"/></svg><input placeholder="Zur Suche Text hier eingeben" aria-label="Suche"></label>
  <button aria-label="Cortana"><svg viewBox="0 0 24 24"><circle cx="12" cy="12" r="7" fill="none" stroke="#fff" stroke-width="2"/></svg></button>
  <button aria-label="Taskansicht"><svg viewBox="0 0 24 24"><path fill="none" stroke="#fff" d="M5 9h10v7H5zM5 4v2h10V4M5 21v-2h10v2M18.500 4v4M18.500 12v9"/><path fill="#fff" d="M17 8h3v3h-3z"/></svg></button>
  <button aria-label="Edge"><svg viewBox="0 0 24 24"><circle cx="12" cy="12" r="12" fill="#0c6fc4"/><path fill="#35c17b" d="M2 7C6-2 20-2 23 8c2 6-3 8-7 7 1-7-6-9-14-8"/><path fill="#2aa7dc" d="M0 12c1-7 12-8 14-2-3-1-5 2-5 5 1 5 7 7 11 4-4 6-12 6-16 2"/><path fill="#101010" d="M14 15c1 2 4 2 8 1-2 3-6 4-10 2z"/></svg></button>
  <button class="run" aria-label="Explorer"><svg viewBox="0 0 24 24"><path fill="#e8a33a" d="M1 3h9l2 3h11v5H1z"/><path fill="#ffd667" d="M1 7h22v14H1z"/><path fill="#3d9be0" d="M5 21v-7h14v7h-4v-4H9v4z"/></svg></button>
  <button class="run" aria-label="Rechner"><svg viewBox="0 0 24 24"><path fill="#fff" d="M3 0h18v24H3z"/><path fill="#101010" d="M5 3h14v4H5zM6 10h3v2H6zM11 10h3v2h-3zM16 10h2v2h-2zM6 14h3v2H6zM11 14h3v2h-3zM16 14h2v2h-2zM6 18h3v2H6zM11 18h3v2h-3zM16 18h2v2h-2z"/></svg></button>
  <button aria-label="Chrome"><svg viewBox="0 0 24 24"><circle cx="12" cy="12" r="11" fill="#fcc934"/><path fill="#ea4335" d="M2 7a11 11 0 0 1 20 0H12L7 14z"/><path fill="#34a853" d="M2 7l6 9h6l-4 7A11 11 0 0 1 2 7"/><circle cx="12" cy="12" r="5" fill="#4285f4" stroke="#fff" stroke-width="1"/></svg></button>
  <button aria-label="Bibliothek"><svg viewBox="0 0 24 24"><path fill="#0078d7" d="M0 0h24v24H0z"/><path fill="#fff" d="M12 3l10 6-10 5L2 9zM2 11l10 5 10-5v4l-10 6-10-6z"/><path fill="none" stroke="#0078d7" d="M6 9c4-3 8-3 12 0-4 3-8 3-12 0z"/><circle cx="12" cy="9" r="1" fill="#0078d7"/></svg></button>
  <button class="run cur" aria-label="ARCHICAD"><svg viewBox="0 0 24 24"><rect x="1" y="1" width="22" height="22" rx="2" fill="#3964cf"/><path fill="none" stroke="#fff" stroke-width="2" d="M3 22C5 10 9 4 14 5c3 1 5 4 6 8"/><circle cx="20" cy="16" r="1" fill="#fff"/></svg></button>
  <button class="run" aria-label="Lupe"><svg viewBox="0 0 24 24"><path fill="#35a9f0" d="M4 1h20v17H4z"/><path fill="#8fd3ff" d="M4 1h20L4 12z"/><circle cx="7" cy="13" r="5" fill="#b7dcf2" stroke="#8aa"/><path stroke="#999" stroke-width="2" d="M10 17l5 6"/></svg></button>
  <div class="tray">
    <svg class="i" viewBox="0 0 20 20"><path d="M4 13l6-6 6 6"/></svg>
    <svg class="i" viewBox="0 0 20 20"><path d="M8 6h10v8H6M3 5v3h4V5M5 8v8M3 5V3M7 5V3M19 9v2"/><path class="f" d="M8 8h8v4H8z"/></svg>
    <svg class="i" viewBox="0 0 20 20"><circle cx="10" cy="10" r="8"/><path d="M2 10h16M10 2v16M10 2C4 6 4 14 10 18M10 2c6 4 6 12 0 16M4 5h12M4 14h8"/><circle cx="15" cy="15" r="3" fill="#101010"/></svg>
    <svg class="i" viewBox="0 0 20 20"><path d="M2 8h3l4-4v12l-4-4H2zM13 8l4 4M17 8l-4 4"/></svg>
    <span>DEU</span>
    <time>12:41<br>01.09.2021</time>
    <svg class="note-i" viewBox="0 0 28 28"><path fill="#fff" d="M4 2h18v16H12l-4 5v-5H4z"/><path stroke="#101010" d="M7 6.500h12M7 10.500h12M7 14.500h8"/><circle cx="20" cy="20" r="8" fill="#333" stroke="#999"/><text x="17" y="25">1</text></svg>
  </div>
</div>
</body>
</html>
```
FILE: styles.css
```css
* { box-sizing: border-box; }
body { margin: 0; height: 100vh; display: flex; flex-direction: column; overflow: hidden; background: #f0f0f0; color: #000; font: 11px/16px "Open Sans", "Noto Sans", sans-serif; }
button, input, select { font: inherit; color: inherit; margin: 0; }
button { border: 0; padding: 0; background: none; display: flex; align-items: center; justify-content: center; flex: none; }
a { color: inherit; text-decoration: none; }
p { margin: 0; }
hr { border: 0; margin: 0; }
b { flex: none; width: 0; height: 0; border: 4px solid transparent; border-left: 5px solid #333; border-right: 0; }

.i { width: 20px; height: 20px; flex: none; fill: none; stroke: #28363f; stroke-width: 1.2; overflow: visible; }
.i.l { width: 26px; }
.i.s { width: 9px; height: 9px; }
.i .f { fill: #28363f; }
.i .b { stroke: #2a7fff; }
.i .bf { stroke: #2a7fff; fill: #2a7fff; }
.i .o { stroke: #f5821f; }
.i .g { stroke: #999; }
.i .w { fill: #fafafa; }
.i .wh { stroke: #fff; }
.i .pt { stroke: #555; stroke-width: 1; stroke-dasharray: 1 2; }
.i .it { font: bold 8px "Liberation Sans", sans-serif; fill: #28363f; stroke: none; }
.i .abc { font: 10px "Open Sans", sans-serif; }
.i .al { font-size: 13px; font-weight: normal; }
.i .big { font: 15px "Open Sans", sans-serif; }
.dis .i, .i.dis { opacity: .4; }
.on { background: #c0dcf3; box-shadow: inset 0 0 0 1px #90c8f6; }
.grip { width: 70px; height: 1px; background: #888; margin: 0 auto; flex: none; }
.line { height: 1px; background: #a0a0a0; }

.titlebar { display: flex; align-items: center; height: 23px; background: #fff; padding-left: 2px; }
.applogo { width: 16px; height: 16px; }
h1 { font-size: 12px; line-height: 20px; font-weight: 400; margin: 0 0 0 5px; flex: 1; }
.winbtns { display: flex; }
.winbtns button { width: 46px; height: 20px; }
.menubar { display: flex; align-items: center; gap: 15px; height: 18px; padding: 2px 4px 0 7px; background: #fff; }
.docbtns { margin-left: auto; display: flex; gap: 5px; }

.toolbar { display: flex; align-items: center; height: 37px; border-bottom: 1px solid #d8d8d8; overflow: hidden; }
.toolbar button { width: 25px; height: 30px; }
.toolbar .w { width: 30px; }
.toolbar .drop { width: 16px; }
.toolbar b, .sect.open::before, .navi b { border: 4px solid transparent; border-top: 5px solid #222; border-bottom: 0; }
.sep { width: 1px; height: 28px; background: #888; margin: 0 5px 0 3px; flex: none; }
.sep.short { height: 14px; margin: 0 0 0 4px; }

.middle { flex: 1; min-height: 0; display: flex; position: relative; }
.sidebar { width: 185px; flex: none; border-right: 1px solid #d4d4d4; padding-top: 4px; overflow: hidden; }
.arrowrow { display: flex; height: 37px; }
.arrowrow button { width: 36px; }
.sect { width: 184px; height: 20px; background: #d3d3d3; border-radius: 3px; justify-content: flex-start; padding-left: 8px; margin-bottom: 1px; }
.sect::before { content: ""; border: 4px solid transparent; border-left: 5px solid #444; border-right: 0; margin-right: 9px; }
.sect.open::before { margin-left: -2px; margin-right: 8px; }
.tools { display: grid; grid-template-columns: repeat(5, 36px); grid-auto-rows: 30px; padding: 1px 0 4px; }
.docs { position: relative; padding: 0 0 7px; }
.docs .on { height: 27px; align-self: center; }
.docs .scroll { position: absolute; right: 0; top: 6px; width: 9px; height: 54px; }
.u { fill: none; stroke: #555; stroke-width: 2; }
.cap { font-size: 9px; line-height: 14px; padding-left: 2px; }
.info { border-top: 1px solid #ddd; padding-top: 3px; height: 145px; overflow: hidden; }
.info .cap { margin-top: 4px; }
.mainrow { display: flex; align-items: center; justify-content: space-between; height: 28px; margin-top: 8px; padding-right: 7px; }
.info .mainrow .cap { margin: 0; }
.raised { background: #e1e1e1; border: 1px solid #adadad; }
.mainrow .raised { width: 48px; height: 28px; gap: 6px; }
.info .eb { border-top: 1px solid #a0a0a0; margin-top: 9px; padding-top: 5px; }
.layer { width: 175px; height: 28px; margin: 8px 0 9px 3px; gap: 2px; justify-content: flex-start; padding-left: 5px; white-space: nowrap; }
.info .clip { border-top: 1px solid #a0a0a0; margin: 0; padding-top: 2px; }
.trace { border-top: 1px solid #ddd; padding-top: 4px; }
.row { display: flex; align-items: center; }
.trace .raised { width: 28px; height: 28px; margin-left: 3px; }
.trace .row:first-of-type { margin-top: 6px; gap: 2px; }
.ref { background: #ccc; border: 1px solid #b5b5b5; color: #777; height: 28px; flex: 1; justify-content: flex-start; padding-left: 2px; gap: 1px; }
.ref .i { opacity: .5; }
.ghost { height: 38px; padding-left: 7px; gap: 10px; }
.ghost .i { opacity: .45; }
.ghost .sp { margin-left: 30px; }
.lab { display: block; color: #6d6d6d; padding: 8px 0 4px 2px; }
.lab.dark { color: #000; }
.slide { height: 28px; padding-left: 3px; gap: 8px; }
.sq { width: 28px; flex: none; gap: 4px; }
.slide + .lab { padding-top: 5px; }
.slide.second { margin-bottom: 6px; }
.red { width: 12px; height: 12px; background: #f08484; }
.pie { width: 14px; height: 14px; }
.ref b { border-left-color: #888; }
.track { width: 119px; }
.track input { appearance: none; display: block; width: 119px; height: 12px; background: linear-gradient(#c8d0d0, #c8d0d0) 0 4px / 100% 4px no-repeat; }
.track input::-webkit-slider-thumb { appearance: none; width: 7px; height: 12px; background: #bbb; border-radius: 0 0 3px 3px; }
.ticks { display: flex; justify-content: space-between; padding: 2px 3px 0; }
.ticks i { width: 1px; height: 4px; background: #aaa; }
.mid { padding-left: 37px; height: 37px; }
.reno { border-top: 1px solid #ddd; padding-top: 4px; }
.reno .lab:first-of-type { padding: 6px 0 3px 2px; }
.els { padding: 0 3px 6px 2px; }
.els button { width: 30px; height: 29px; }
.els .end { margin-left: auto; }
#filt { appearance: none; display: block; width: 180px; height: 22px; margin-left: 2px; padding: 0 5px; border: 1px solid #777; border-radius: 0; background: #fff url("data:image/svg+xml,%3Csvg xmlns='http://www.w3.org/2000/svg' width='10' height='6'%3E%3Cpath d='M1 1l4 4 4-4' fill='none' stroke='%23333'/%3E%3C/svg%3E") no-repeat right 4px center; }

.main { flex: 1; min-width: 0; display: flex; flex-direction: column; }
.tabs { display: flex; height: 22px; background: #d9d9d9; }
.tabs .ov { width: 26px; }
.tabs .ov .i, .tabs .tab .i { width: 18px; height: 18px; }
.tab { width: 300px; min-width: 0; flex: 0 1 auto; display: flex; align-items: center; gap: 2px; padding: 0 8px 0 4px; border-right: 1px solid #bdbdbd; }
.tab.act { background: #fff; }
.tab span { margin-left: auto; font-size: 14px; font-weight: 700; }
.navi { margin-left: auto; width: 50px; background: #e8e8e8; gap: 8px; }
.canvas { flex: 1; min-height: 0; position: relative; background: #fff; overflow: hidden; }
.note { color: #444; font-size: 10px; padding: 16px 18px; }
.plan { position: absolute; inset: 0; stroke: #000; fill: none; }
.plan path { shape-rendering: crispEdges; }
.plan text { fill: #000; stroke: none; }
.plan .dots { fill: #000; }
.dim { font: 23px "Roboto Condensed", Roboto, sans-serif; text-anchor: middle; }
.sup { font-size: 16px; }
.num { font: 15px "Liberation Sans", sans-serif; }
.dash { stroke-dasharray: 11 6; }
.handle { position: absolute; width: 32px; height: 16px; background: linear-gradient(90deg, #f5a050 70%, transparent 0) 4px 8px / 7px 1px repeat-x #f3f3f3; border-radius: 2px; }
.handle.top { top: 1px; left: 49%; }
.handle.bottom { bottom: 2px; left: 49%; }
.handle.right { right: 1px; top: 48%; width: 16px; height: 32px; background: linear-gradient(#f5a050 70%, transparent 0) 8px 4px / 1px 7px repeat-y #f3f3f3; }
.layers { position: absolute; right: 121px; top: 3px; width: 314px; height: 36px; display: flex; align-items: center; gap: 10px; background: #f0f0f0; border: 2px solid #b4b4b4; }
.lx { width: 19px; flex: none; align-self: stretch; }
.close { width: 11px; height: 11px; background: #c75050; color: #fff; font-size: 10px; line-height: 10px; font-weight: 700; }
.lx i, .pgrip i { display: block; width: 1px; height: 14px; background: #888; margin: 4px 0 0 5px; }
.grp { flex: none; border-left: 1px solid #999; height: 30px; width: 95px; margin-left: -3px; padding-left: 2px; line-height: 15px; white-space: nowrap; }
.grp div { display: flex; gap: 14px; padding-left: 6px; }
.grp .i { width: 16px; height: 14px; display: block; }
.grp + .grp { margin-left: -10px; }
.grp.last { width: 34px; padding-left: 10px; }
.brand { position: absolute; right: 17px; bottom: 14px; color: #666; font: 16px/24px Lato, sans-serif; }

.quick { display: flex; height: 20px; border-bottom: 1px solid #d8d8d8; }
.zooms { width: 71px; display: flex; align-items: center; gap: 7px; padding-left: 3px; flex: none; }
.zooms .i, .quick button .i { width: 16px; height: 16px; }
.quick button { flex: 1 1 0; min-width: 0; border-left: 1px solid #999; padding: 0 6px; white-space: nowrap; }
.quick span { flex: 1; min-width: 0; text-align: center; }

.palette { position: absolute; left: 169px; top: 357px; width: 54px; display: flex; border: 1px solid #666; border-top: 8px solid #fff; outline: 1px solid #666; outline-offset: -1px; background: #f0f0f0; box-shadow: 4px 4px 14px #0006; }
.pgrip { width: 23px; padding: 1px; }
.pgrip i { height: 72px; margin-top: 163px; margin-left: 6px; }
.pcol { flex: 1; }
.pcol button { width: 29px; height: 24px; padding-right: 5px; }

.coords { display: flex; align-items: center; height: 37px; border-bottom: 1px solid #d8d8d8; overflow: hidden; white-space: nowrap; }
.coords > button { width: 30px; height: 29px; }
.coords > .sep { margin: 0 5px; }
.coords > .sep.short:first-child { margin: 0 5px 0 4px; }
.box { background: #e1e1e1; border: 1px solid #adadad; }
.box.gray { background: #ccc; border-color: #bbb; }
.blue { background: #cce4f7; border: 1px solid #0a5a9e; }
.coords > .delta { width: 15px; background: #cce4f7; border: 1px solid #0a5a9e; font-weight: 700; }
.pair { display: grid; grid-template-columns: 19px 90px; column-gap: 1px; padding-left: 10px; }
.pair label, .zl label { height: 15px; line-height: 15px; font-weight: 600; display: flex; justify-content: flex-end; }
.coords input { width: 90px; height: 15px; line-height: 15px; border: 0; padding: 0 1px; background: #fff; }
.zbox { width: 140px; padding-left: 11px; }
.zl, .zp { display: flex; gap: 1px; }
.zl label { width: 19px; }
.zp span { width: 96px; }
.mini { width: 14px; height: 14px; background: #e1e1e1; border: 1px solid #adadad; }
.coords > .mini { width: 14px; }
.coords > .mini.up { height: 14px; align-self: flex-start; margin-top: 4px; }
.half { width: 77px; padding-left: 3px; display: flex; flex-direction: column; }
.two { color: #777; }
.coords > .cmd { width: 68px; height: 21px; margin-right: 2px; background: #ccc; border: 1px solid #bfbfbf; color: #838383; }

.status { display: flex; align-items: center; height: 22px; padding: 0 23px 0 2px; }
.status span { flex: 1; }
.status a { border: solid #ccc; border-width: 0 1px; margin-left: 3px; padding: 0 15px; color: #999; font: 14px/20px Lato, sans-serif; }
.status em { font-style: normal; font-weight: 300; }

.taskbar { display: flex; height: 40px; background: #101010; color: #fff; }
.taskbar > button { width: 49px; padding: 0 4px; }
.taskbar > button svg { width: 24px; height: 24px; }
.taskbar > .start { width: 48px; }
.taskbar > .start svg { width: 16px; height: 16px; }
.run { background: linear-gradient(#76b9ed, #76b9ed) 4px 38px / 40px 2px no-repeat; }
.cur { background: linear-gradient(#76b9ed, #76b9ed) 0 38px / 49px 2px no-repeat #333; }
.search { width: 343px; display: flex; align-items: center; gap: 9px; padding-left: 10px; background: #f2f2f2; border: 1px solid #bbb; }
.search input { flex: 1; border: 0; background: none; font-size: 14px; padding: 0; }
.search input::placeholder { color: #333; }
.tray { margin-left: auto; display: flex; align-items: center; gap: 4px; padding-right: 17px; }
.tray .i { stroke: #fff; }
.tray .i .f { fill: #fff; }
.tray span { margin: 0 9px 0 5px; }
time { text-align: center; line-height: 20px; }
.note-i { width: 28px; height: 28px; margin-left: 10px; }
.note-i text { fill: #fff; font-size: 12px; }
```
